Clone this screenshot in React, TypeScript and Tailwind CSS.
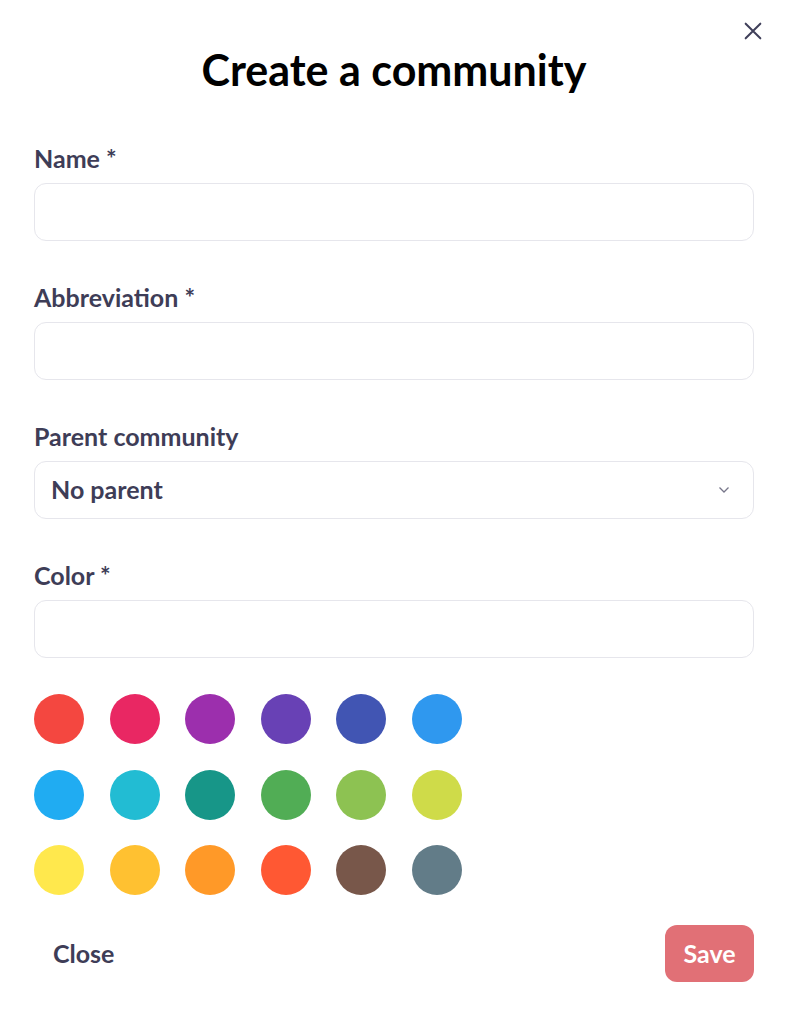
import { useState } from "react";

const COLORS = [
  "#f44740", "#e92763", "#9c2fad", "#6841b5", "#4155b3", "#2f98ef",
  "#20acf2", "#22bcd3", "#179688", "#51ad55", "#8dc252", "#cfdb49",
  "#ffe84d", "#ffc131", "#ff9928", "#ff5833", "#78574a", "#627c88",
];

function Field({ label, children }: { label: string; children: React.ReactNode }) {
  return (
    <div className="flex flex-col gap-[11px]">
      <label className="text-[25px] leading-[28px] font-bold text-[#3e3d57]">{label}</label>
      {children}
    </div>
  );
}

export default function App() {
  const [name, setName] = useState("");
  const [abbr, setAbbr] = useState("");
  const [color, setColor] = useState("");

  const inputCls =
    "w-full h-[58px] px-4 rounded-[12px] border border-[#e6e6ec] bg-white text-[25px] font-bold text-[#3e3d57] focus:outline-none";

  return (
    <div className="relative min-h-screen bg-white font-['Lato',sans-serif]">
      <button className="absolute right-[26px] top-[20px] text-[#40405a]" aria-label="Close">
        <svg width="22" height="22" viewBox="0 0 24 24" fill="none" stroke="currentColor" strokeWidth="2.2" strokeLinecap="round">
          <path d="M4 4L20 20M20 4L4 20" />
        </svg>
      </button>

      <div className="pl-[34px] pr-[36px] pt-[45px] pb-8">
        <h1 className="text-center text-[43px] leading-[50px] font-bold text-black">Create a community</h1>

        <div className="mt-[49px] flex flex-col gap-[42px]">
          <Field label="Name *">
            <input className={inputCls} value={name} onChange={(e) => setName(e.target.value)} />
          </Field>
          <Field label="Abbreviation *">
            <input className={inputCls} value={abbr} onChange={(e) => setAbbr(e.target.value)} />
          </Field>
          <Field label="Parent community">
            <div className="relative">
              <select className={inputCls + " appearance-none"} defaultValue="none">
                <option value="none">No parent</option>
              </select>
              <svg
                className="pointer-events-none absolute right-[24px] top-1/2 -translate-y-1/2 text-[#77768a]"
                width="12" height="8" viewBox="0 0 12 8" fill="none" stroke="currentColor" strokeWidth="1.3"
              >
                <path d="M1.5 1.5L6 6L10.5 1.5" />
              </svg>
            </div>
          </Field>
          <Field label="Color *">
            <input className={inputCls} value={color} onChange={(e) => setColor(e.target.value)} />
          </Field>
        </div>

        <div className="mt-[36px] grid grid-cols-[repeat(6,50px)] gap-x-[25.6px] gap-y-[25.5px]">
          {COLORS.map((c) => (
            <button
              key={c}
              onClick={() => setColor(c)}
              className="w-[50px] h-[50px] rounded-full"
              style={{ backgroundColor: c }}
            />
          ))}
        </div>

        <div className="mt-[30px] flex items-center justify-between">
          <button className="px-[19px] h-[57px] text-[25px] font-bold text-[#3e3d57]">Close</button>
          <button className="w-[89px] h-[57px] rounded-[12px] bg-[#e17076] text-[25px] font-bold text-white">Save</button>
        </div>
      </div>
    </div>
  );
}
